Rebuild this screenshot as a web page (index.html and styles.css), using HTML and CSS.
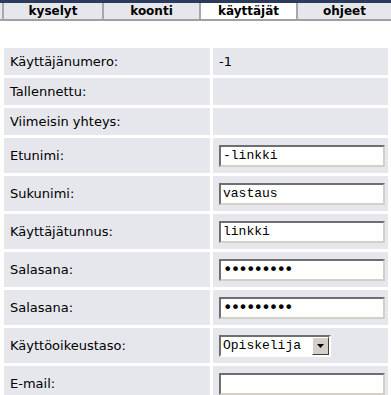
FILE: index.html
```html
<!DOCTYPE html>
<html>
<head>
  <meta charset="utf-8">
  <title>Käyttäjät</title>
  <link rel="stylesheet" href="styles.css">
</head>
<body>
  <div class="tabs">
    <a class="tab" href="#">kyselyt</a>
    <a class="tab" href="#">koonti</a>
    <a class="tab active" href="#">käyttäjät</a>
    <a class="tab" href="#">ohjeet</a>
  </div>

  <div class="content">
    <table class="user-form">
      <tr class="info">
        <td class="label">Käyttäjänumero:</td>
        <td class="value">-1</td>
      </tr>
      <tr class="info">
        <td class="label">Tallennettu:</td>
        <td class="value"></td>
      </tr>
      <tr class="info">
        <td class="label">Viimeisin yhteys:</td>
        <td class="value"></td>
      </tr>
      <tr>
        <td class="label">Etunimi:</td>
        <td class="value"><input type="text" value="-linkki"></td>
      </tr>
      <tr>
        <td class="label">Sukunimi:</td>
        <td class="value"><input type="text" value="vastaus"></td>
      </tr>
      <tr>
        <td class="label">Käyttäjätunnus:</td>
        <td class="value"><input type="text" value="linkki"></td>
      </tr>
      <tr>
        <td class="label">Salasana:</td>
        <td class="value"><input type="password" value="salasana1"></td>
      </tr>
      <tr>
        <td class="label">Salasana:</td>
        <td class="value"><input type="password" value="salasana1"></td>
      </tr>
      <tr>
        <td class="label">Käyttöoikeustaso:</td>
        <td class="value">
          <div class="select">
            <span class="select-text">Opiskelija</span>
            <span class="select-btn">
              <svg width="7" height="4" viewBox="0 0 7 4"><path d="M0 0h7L3.5 4z" fill="#000"/></svg>
            </span>
          </div>
        </td>
      </tr>
      <tr>
        <td class="label">E-mail:</td>
        <td class="value"><input type="text" value=""></td>
      </tr>
    </table>
  </div>
</body>
</html>
```

FILE: styles.css
```css
* { box-sizing: border-box; }
body {
  margin: 0;
  font-family: "DejaVu Sans", Verdana, sans-serif;
  font-size: 13px;
  color: #000;
  background: #fff;
}

.tabs {
  display: grid;
  grid-template-columns: 100px 97px 97px 1fr;
  border-top: 3px solid #2b3b5c;
  border-bottom: 2px solid #a0a0a0;
  padding-left: 2px;
  background: #e6e7ec;
}
.tab {
  display: block;
  height: 16px;
  line-height: 16px;
  text-align: center;
  font-weight: bold;
  font-size: 12px;
  color: #000;
  text-decoration: none;
  border-left: 2px solid #a8a8a8;
  background: #e6e7ec;
}
.tab.active {
  background: #fff;
}

.content {
  padding: 24px 0 0 1px;
}

.user-form {
  width: 100%;
  border-spacing: 3px;
  border-collapse: separate;
}
.user-form td {
  background: #e6e7ec;
  height: 35px;
  padding: 0 3px 0 6px;
  vertical-align: middle;
}
.user-form tr.info td {
  height: 27px;
}
.user-form td.label {
  width: 207px;
}

input {
  width: 166px;
  height: 22px;
  margin: 0;
  padding: 0 2px;
  font-family: "Liberation Mono", "Courier New", monospace;
  font-size: 13px;
  color: #000;
  background: #fff;
  border: 2px solid;
  border-color: #6f6f6f #d4d0c8 #d4d0c8 #6f6f6f;
  outline: none;
}
input[type="password"] {
  font-family: "DejaVu Sans", Verdana, sans-serif;
  font-size: 16px;
  letter-spacing: -1.8px;
}

.select {
  display: flex;
  align-items: stretch;
  width: 112px;
  height: 22px;
  border: 2px solid;
  border-color: #6f6f6f #fff #fff #6f6f6f;
  background: #fff;
}
.select-text {
  flex: 1;
  padding-left: 2px;
  line-height: 18px;
  font-family: "Liberation Mono", "Courier New", monospace;
  font-size: 13px;
}
.select-btn {
  width: 17px;
  display: flex;
  align-items: center;
  justify-content: center;
  background: #d4d0c8;
  border: 1px solid;
  border-color: #fff #404040 #404040 #fff;
}
```
